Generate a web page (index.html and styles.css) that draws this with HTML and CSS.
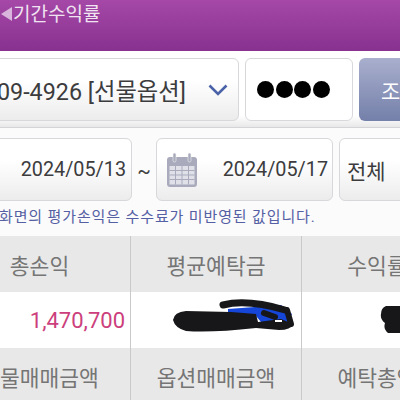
FILE: index.html
```html
<!DOCTYPE html>
<html lang="ko">
<head>
    <meta charset="UTF-8">
    <meta name="viewport" content="width=device-width, initial-scale=1.0">
    <title>기간수익률</title>
    <link rel="stylesheet" href="styles.css">
</head>
<body>
    <header class="top-bar">
        <span class="back-arrow"></span>
        <h1>기간수익률</h1>
    </header>

    <section class="account-row">
        <div class="box account-select">
            <span class="account-text">09-4926 [선물옵션]</span>
            <svg class="chevron" width="20" height="12" viewBox="0 0 20 12">
                <path d="M1.5 1.5 L10 10 L18.5 1.5" fill="none" stroke="#4a62a8" stroke-width="2.6"/>
            </svg>
        </div>
        <div class="box password">
            <span class="dot"></span><span class="dot"></span><span class="dot"></span><span class="dot"></span>
        </div>
        <button class="search-btn" type="button">조회</button>
    </section>

    <section class="date-row">
        <div class="box date-box date-from">2024/05/13</div>
        <span class="tilde">~</span>
        <div class="box date-box date-to">
            <svg class="calendar" width="32" height="36" viewBox="0 0 32 36">
                <rect x="1" y="5" width="30" height="30" rx="3" fill="#a9abbd"/>
                <rect x="3.5" y="14" width="25" height="18.5" fill="#dfe0e8"/>
                <path d="M3.5 18.5 H28.5 M3.5 23 H28.5 M3.5 27.5 H28.5 M9.5 14 V32.5 M16 14 V32.5 M22.5 14 V32.5" stroke="#a9abbd" stroke-width="1"/>
                <rect x="7" y="1" width="3" height="9" rx="1.5" fill="#a9abbd" stroke="#f2f2f2" stroke-width="0.6"/>
                <rect x="22" y="1" width="3" height="9" rx="1.5" fill="#a9abbd" stroke="#f2f2f2" stroke-width="0.6"/>
            </svg>
            <span>2024/05/17</span>
        </div>
        <div class="box kind-box">전체</div>
    </section>

    <p class="notice">화면의 평가손익은 수수료가 미반영된 값입니다.</p>

    <section class="summary">
        <div class="cell head">총손익</div>
        <div class="cell head">평균예탁금</div>
        <div class="cell head">수익률</div>
        <div class="cell value profit">1,470,700</div>
        <div class="cell value">
            <svg class="scribble" width="170" height="56" viewBox="0 0 170 56">
                <path d="M97 17 L150 13 L161 22 L156 32 L130 30 L125 24 L97 24 Z" fill="#1546d8"/>
                <path d="M92 13 C108 9 130 11 154 18" fill="none" stroke="#17171a" stroke-width="7" stroke-linecap="round"/>
                <path d="M42 28 Q43 20 55 19 L100 20 L125 22 L127 30 L150 27 L162 32 Q160 38 148 38 L125 36 Q80 41 55 39 Q44 36 42 28 Z" fill="#17171a"/>
                <path d="M133 21 L144 25" fill="none" stroke="#17171a" stroke-width="6" stroke-linecap="round"/>
                <path d="M156 18 L160 32" fill="none" stroke="#17171a" stroke-width="6" stroke-linecap="round"/>
                <path d="M144 29 H151" stroke="#ffffff" stroke-width="2"/>
            </svg>
        </div>
        <div class="cell value value-right">
            <svg class="scribble" width="22" height="30" viewBox="0 0 22 30">
                <path d="M6 1 H22 V28 H8 Q3 24 5 18 Q0 14 1 9 Q1 3 6 1 Z" fill="#17171a"/>
            </svg>
        </div>
        <div class="cell head">선물매매금액</div>
        <div class="cell head">옵션매매금액</div>
        <div class="cell head">예탁총액</div>
    </section>
</body>
</html>
```

FILE: styles.css
```css
/* General Styling */
* {
    box-sizing: border-box;
    margin: 0;
    padding: 0;
    font-family: 'Roboto', 'Noto Sans CJK KR', sans-serif;
}

html, body {
    width: 400px;
    height: 400px;
    overflow: hidden;
}

body {
    background: #fbfbfb;
}

/* Top Bar */
.top-bar {
    height: 51px;
    background: linear-gradient(to bottom, #a548a8, #88318f);
    display: flex;
    align-items: flex-start;
}

.back-arrow {
    width: 0;
    height: 0;
    margin-top: 7px;
    margin-left: 1px;
    border-top: 7px solid transparent;
    border-bottom: 7px solid transparent;
    border-right: 11px solid #d9b4dc;
}

.top-bar h1 {
    font-size: 19px;
    font-weight: 400;
    line-height: 30px;
    margin-left: 1px;
    color: #f0e4f1;
}

/* Shared box */
.box {
    border: 1px solid #d8d8dc;
    border-radius: 6px;
    background: linear-gradient(to bottom, #ffffff 35%, #ececec);
    color: #3c3c3e;
    display: flex;
    align-items: center;
    flex-shrink: 0;
}

/* Account Row */
.account-row {
    height: 77px;
    padding-top: 7px;
    padding-bottom: 6px;
    display: flex;
    border-bottom: 1px solid #d4d4d8;
    background: linear-gradient(to bottom, #ffffff 85%, #e8e8e8);
}

.account-select {
    width: 259px;
    margin-left: -20px;
    justify-content: space-between;
    padding-right: 10px;
    white-space: nowrap;
}

.account-text {
    font-size: 23.3px;
    margin-left: 16px;
}

.password {
    width: 108px;
    margin-left: 6px;
    background: #ffffff;
    padding-left: 11px;
    gap: 1.5px;
}

.dot {
    width: 17px;
    height: 17px;
    border-radius: 50%;
    background: #000000;
}

.search-btn {
    width: 60px;
    margin-left: 6px;
    flex-shrink: 0;
    border: none;
    border-radius: 6px;
    background: linear-gradient(to bottom, #a9afcd, #7480aa);
    color: #ffffff;
    font-size: 21px;
    text-align: left;
    padding-left: 22px;
    white-space: nowrap;
}

/* Date Row */
.date-row {
    margin-top: 10px;
    height: 63px;
    display: flex;
    align-items: stretch;
}

.date-box {
    font-size: 19.8px;
}

.date-from {
    width: 152px;
    margin-left: -20px;
    justify-content: flex-end;
    padding-right: 5px;
}

.tilde {
    width: 24px;
    flex-shrink: 0;
    text-align: center;
    line-height: 66px;
    font-size: 20px;
    color: #444444;
}

.date-to {
    width: 177px;
    justify-content: space-between;
    padding-left: 9px;
    padding-right: 4px;
}

.kind-box {
    width: 80px;
    margin-left: 6px;
    padding-left: 7px;
    font-size: 21px;
}

/* Notice */
.notice {
    margin-left: -1px;
    height: 35px;
    line-height: 32px;
    font-size: 15px;
    letter-spacing: 0.87px;
    color: #5560a4;
    white-space: nowrap;
}

/* Summary Table */
.summary {
    display: grid;
    margin-left: -51px;
    width: 503px;
    grid-template-columns: 182px 171px 150px;
    grid-template-rows: 56px 56px 56px;
}

.cell {
    display: flex;
    align-items: center;
    justify-content: center;
    border-right: 1px solid #c9c9c9;
    font-size: 21.5px;
    white-space: nowrap;
    overflow: hidden;
}

.cell:nth-child(3n) {
    border-right: none;
}

.head {
    background: #e8e8e8;
    color: #757575;
}

.value {
    background: #ffffff;
}

.profit {
    color: #cc3f7c;
    font-size: 22px;
    justify-content: flex-end;
    padding-right: 5px;
}

.value-right {
    justify-content: flex-start;
    padding-left: 78px;
}
```
